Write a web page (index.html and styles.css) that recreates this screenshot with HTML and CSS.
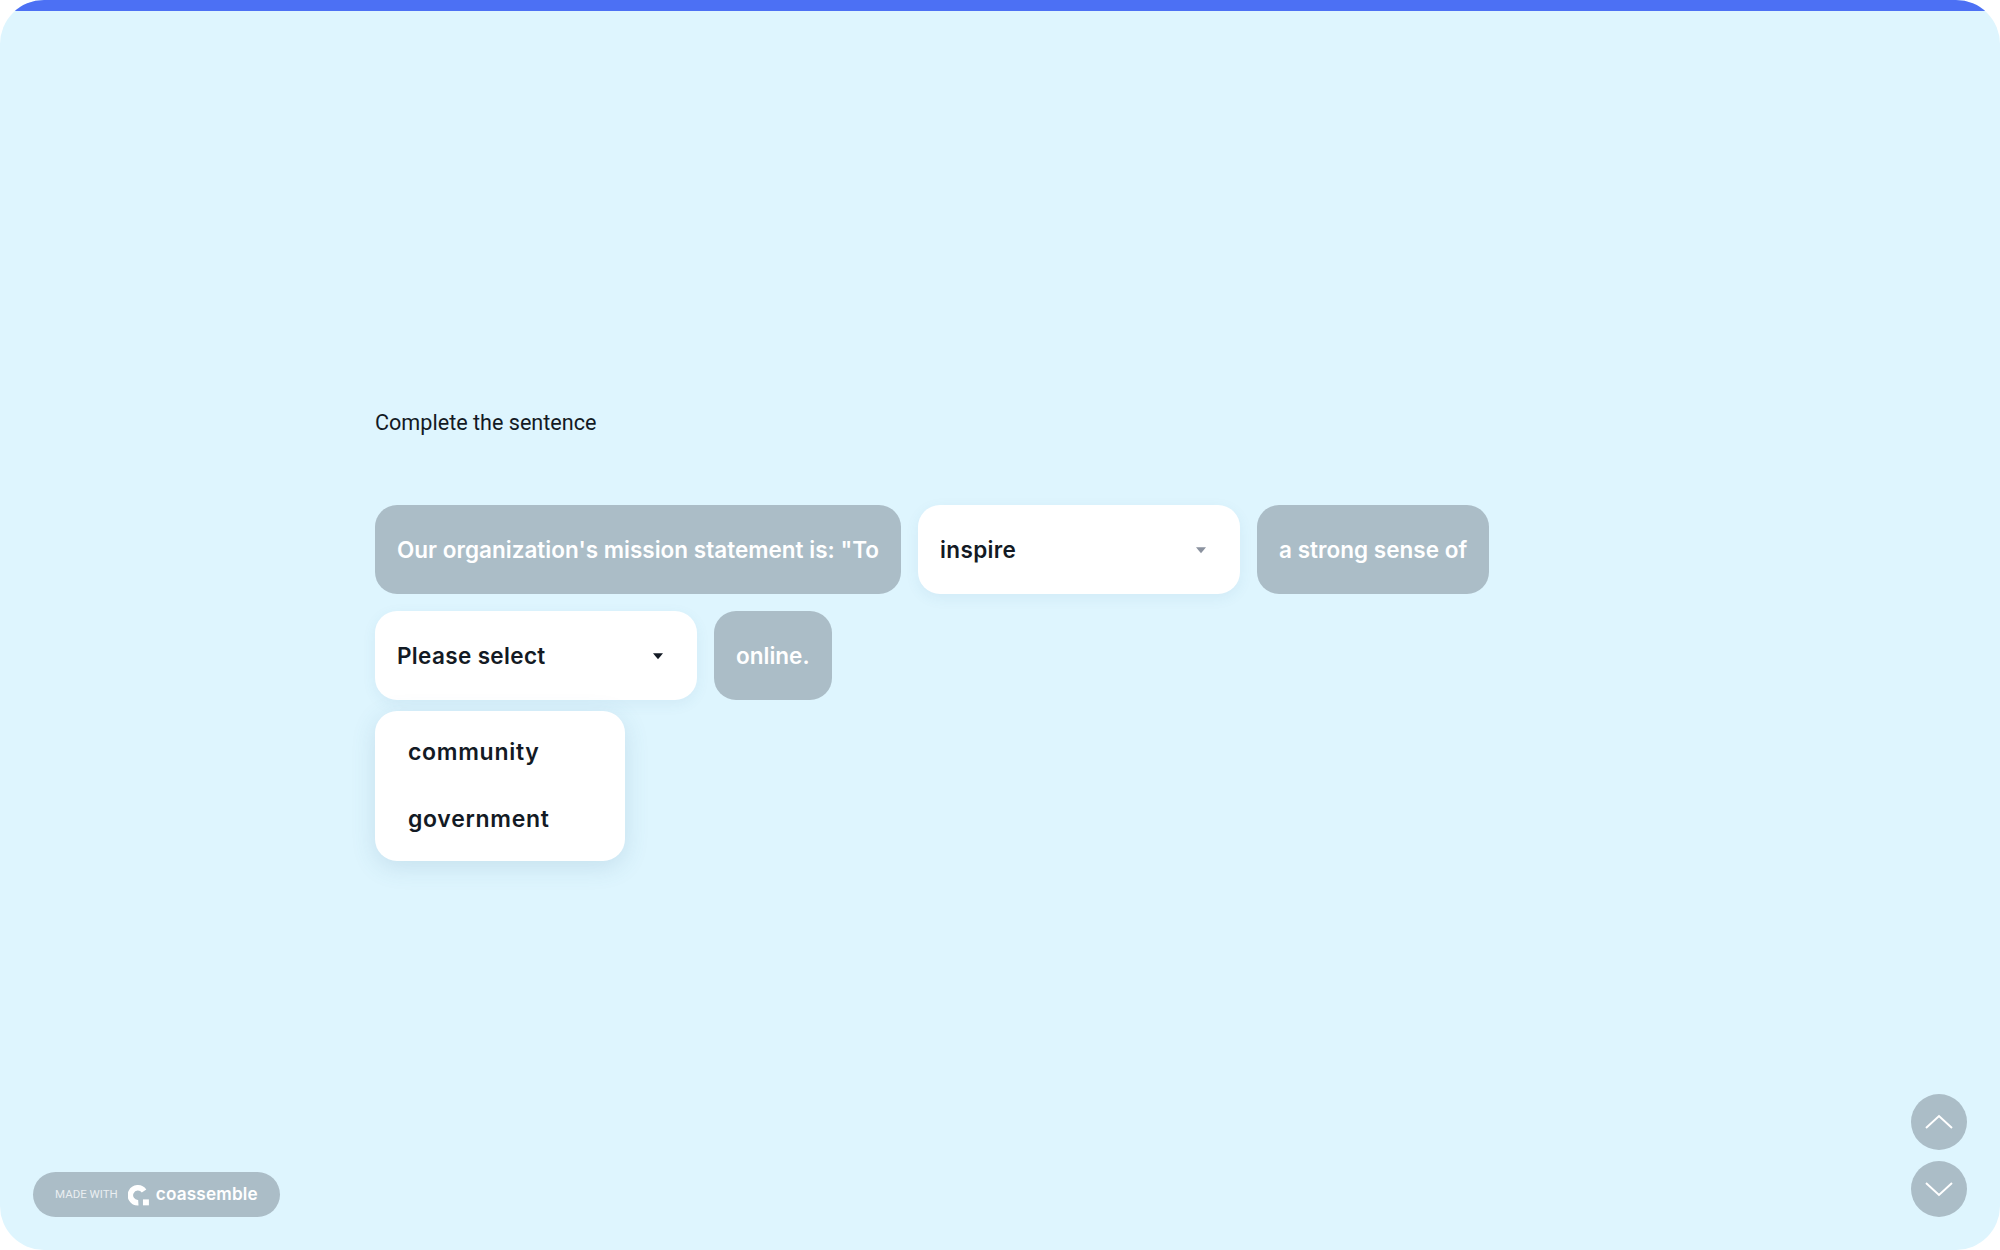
FILE: index.html
```html
<!DOCTYPE html>
<html lang="en">
<head>
    <meta charset="UTF-8">
    <title>Complete the sentence</title>
    <link rel="stylesheet" href="styles.css">
</head>
<body>
    <div class="app">
        <div class="progress"></div>

        <main class="lesson">
            <p class="prompt">Complete the sentence</p>

            <div class="sentence">
                <span class="chunk">Our organization's mission statement is: "To</span>
                <div class="select">
                    <span>inspire</span>
                    <svg class="caret caret-muted" viewBox="0 0 10 7"><path d="M0.6 1h8.8L5 6.4z"/></svg>
                </div>
                <span class="chunk">a strong sense of</span>

                <div class="select-wrap">
                    <div class="select">
                        <span>Please select</span>
                        <svg class="caret" viewBox="0 0 10 7"><path d="M0.6 1h8.8L5 6.4z"/></svg>
                    </div>
                    <ul class="menu">
                        <li>community</li>
                        <li>government</li>
                    </ul>
                </div>
                <span class="chunk">online.</span>
            </div>
        </main>

        <!-- badge -->
        <div class="badge">
            <span class="badge-made">MADE WITH</span>
            <svg class="badge-logo" viewBox="0 0 20 20">
                <path class="logo-ring" d="M14.6 6.4A6.8 6.8 0 1 0 9.4 17"/>
                <rect class="logo-dot" x="13.6" y="14" width="5.4" height="5.4"/>
            </svg>
            <span class="badge-name">coassemble</span>
        </div>

        <!-- up / down -->
        <div class="nav">
            <button class="nav-btn"><svg viewBox="0 0 30 16"><path d="M2 14L15 2l13 12"/></svg></button>
            <button class="nav-btn"><svg viewBox="0 0 30 16"><path d="M2 2l13 12L28 2"/></svg></button>
        </div>
    </div>
</body>
</html>
```

FILE: styles.css
```css
* {
    padding: 0;
    margin: 0;
    box-sizing: border-box;
}

body {
    background-color: #fff;
    font-family: "Inter", "Liberation Sans", sans-serif;
}

.app {
    position: relative;
    width: 2000px;
    height: 1250px;
    overflow: hidden;
    border-radius: 44px;
    background-color: #def5fe;
}

.progress {
    height: 11px;
    background-color: #4c70f4;
}

.lesson {
    padding: 396px 0 0 375px;
}

.prompt {
    font-family: "Roboto", sans-serif;
    font-size: 21.6px;
    line-height: 32px;
    color: #131a24;
    margin-bottom: 66px;
}

.sentence {
    display: flex;
    flex-wrap: wrap;
    gap: 17px;
    width: 1120px;
}

.chunk,
.select {
    display: flex;
    align-items: center;
    height: 89px;
    padding: 0 22px;
    border-radius: 22px;
    font-size: 22.5px;
    font-weight: 600;
    white-space: nowrap;
}

.chunk {
    background-color: #abbdc7;
    color: #fff;
    letter-spacing: 0.02px;
}

.select {
    justify-content: space-between;
    width: 322px;
    padding-right: 33px;
    background-color: #fff;
    color: #131a24;
    letter-spacing: 0.35px;
    box-shadow: 0 4px 14px rgba(70, 120, 150, 0.08);
}

.caret {
    width: 12px;
    height: 8px;
    fill: #131a24;
}

.caret-muted {
    fill: #8b929f;
}

.select-wrap {
    position: relative;
}

.menu {
    position: absolute;
    top: 100px;
    left: 0;
    width: 250px;
    height: 150px;
    padding: 8px 33px;
    list-style: none;
    background-color: #fff;
    border-radius: 22px;
    box-shadow: 0 6px 24px rgba(70, 120, 150, 0.16);
    color: #131a24;
    font-size: 23px;
    font-weight: 600;
    letter-spacing: 0.7px;
}

.menu li {
    height: 66.5px;
    line-height: 66.5px;
}

.badge {
    position: absolute;
    left: 33px;
    bottom: 33px;
    display: flex;
    align-items: center;
    width: 247px;
    height: 45px;
    padding-left: 22px;
    border-radius: 23px;
    background-color: #abbdc7;
    color: #fff;
}

.badge-made {
    font-family: "Roboto", sans-serif;
    font-size: 11.5px;
    opacity: 0.75;
    margin-right: 10px;
    padding-bottom: 1px;
}

.badge-logo {
    width: 22px;
    height: 22px;
    margin-right: 6px;
}

.logo-ring {
    fill: none;
    stroke: #fff;
    stroke-width: 5;
}

.logo-dot {
    fill: #fff;
}

.badge-name {
    font-size: 17.2px;
    font-weight: 600;
    letter-spacing: 0.15px;
    padding-bottom: 2px;
}

.nav {
    position: absolute;
    right: 33px;
    bottom: 33px;
    display: flex;
    flex-direction: column;
    gap: 11px;
}

.nav-btn {
    display: flex;
    align-items: center;
    justify-content: center;
    width: 56px;
    height: 56px;
    border: none;
    border-radius: 50%;
    background-color: #abbdc7;
}

.nav-btn svg {
    width: 30px;
    height: 16px;
    fill: none;
    stroke: #fff;
    stroke-width: 2;
}
```
